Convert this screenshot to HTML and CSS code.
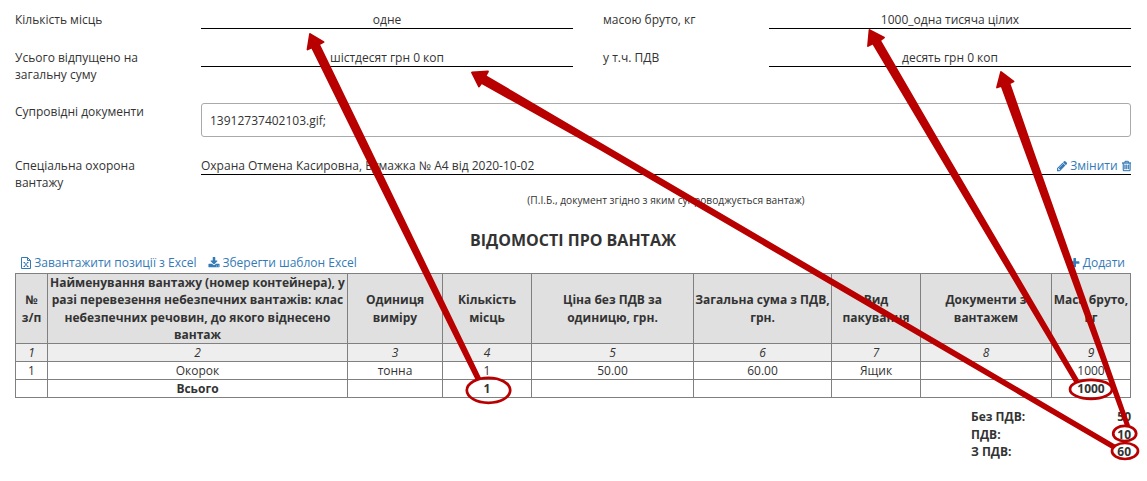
FILE: index.html
```html
<!DOCTYPE html>
<html lang="uk">
<head>
<meta charset="utf-8">
<title>Відомості про вантаж</title>
<link rel="stylesheet" href="styles.css">
</head>
<body>
<main class="page">
  <section class="form">
    <div class="row">
      <div class="label">Кількість місць</div><div class="line">одне</div>
      <div class="label label-mid">масою бруто, кг</div><div class="line">1000_одна тисяча цілих</div>
    </div>
    <div class="row row-sum">
      <div class="label">Усього відпущено на загальну суму</div><div class="line">шістдесят грн 0 коп</div>
      <div class="label label-mid">у т.ч. ПДВ</div><div class="line">десять грн 0 коп</div>
    </div>
    <div class="row row-wide row-docs">
      <div class="label">Супровідні документи</div><div class="files">13912737402103.gif;</div>
    </div>
    <div class="row row-wide row-guard">
      <div class="label">Спеціальна охорона вантажу</div>
      <div>
        <div class="line line-guard">
          <span>Охрана Отмена Касировна, Бумажка № А4 від 2020-10-02</span>
          <span class="actions">
            <a class="link"><svg class="icon icon-pencil" viewBox="128 0 1536 1792"><path d="M491 1536l91-91-235-235-91 91v107h128v128h107zm523-928q0-22-22-22-10 0-17 7l-542 542q-7 7-7 17 0 22 22 22 10 0 17-7l542-542q7-7 7-17zm-54-192l416 416-832 832h-416v-416zm683 96q0 53-37 90l-166 166-416-416 166-165q36-38 90-38 53 0 91 38l235 234q37 39 37 91z"/></svg>Змінити</a>
            <a class="link"><svg class="icon icon-trash" viewBox="192 0 1408 1792"><path d="M704 736v576q0 14-9 23t-23 9h-64q-14 0-23-9t-9-23v-576q0-14 9-23t23-9h64q14 0 23 9t9 23zm256 0v576q0 14-9 23t-23 9h-64q-14 0-23-9t-9-23v-576q0-14 9-23t23-9h64q14 0 23 9t9 23zm256 0v576q0 14-9 23t-23 9h-64q-14 0-23-9t-9-23v-576q0-14 9-23t23-9h64q14 0 23 9t9 23zm128 724v-948h-896v948q0 22 7 40.5t14.5 27 10.5 8.500h832q3 0 10.5-8.500t14.5-27 7-40.500zm-672-1076h448l-48-117q-7-9-17-11h-317q-10 2-17 11zm928 32v64q0 14-9 23t-23 9h-96v948q0 83-47 143.500t-113 60.500h-832q-66 0-113-58.500t-47-141.500v-952h-96q-14 0-23-9t-9-23v-64q0-14 9-23t23-9h309l70-167q15-37 54-63t79-26h320q40 0 79 26t54 63l70 167h309q14 0 23 9t9 23z"/></svg></a>
          </span>
        </div>
        <div class="hint">(П.І.Б., документ згідно з яким супроводжується вантаж)</div>
      </div>
    </div>
  </section>

  <h1 class="title">ВІДОМОСТІ ПРО ВАНТАЖ</h1>

  <nav class="toolbar">
    <a class="link"><svg class="icon icon-excel" viewBox="0 0 10 12"><path class="stroke" d="M.5 .5H6.5L9.500 3.500V11.500H.5ZM6.500 .5V3.500H9.500M2.600 5.500H4.100M5.900 5.500H7.400M3.200 5.500L6.800 9.500M6.800 5.500L3.200 9.500M2.600 9.500H4.100M5.900 9.500H7.400"/></svg>Завантажити позиції з Excel</a>
    <a class="link link-save"><svg class="icon" viewBox="0 0 1792 1792"><path d="M1344 1344q0-26-19-45t-45-19-45 19-19 45 19 45 45 19 45-19 19-45zm256 0q0-26-19-45t-45-19-45 19-19 45 19 45 45 19 45-19 19-45zm128-224v320q0 40-28 68t-68 28h-1472q-40 0-68-28t-28-68v-320q0-40 28-68t68-28h465l135 136q58 56 136 56t136-56l136-136h464q40 0 68 28t28 68zm-325-569q17 41-14 70l-448 448q-18 19-45 19t-45-19l-448-448q-31-29-14-70 17-39 59-39h256v-448q0-26 19-45t45-19h256q26 0 45 19t19 45v448h256q42 0 59 39z"/></svg>Зберегти шаблон Excel</a>
    <a class="link link-add"><svg class="icon icon-plus" viewBox="192 0 1408 1792"><path d="M1600 736v192q0 40-28 68t-68 28h-416v416q0 40-28 68t-68 28h-192q-40 0-68-28t-28-68v-416h-416q-40 0-68-28t-28-68v-192q0-40 28-68t68-28h416v-416q0-40 28-68t68-28h192q40 0 68 28t28 68v416h416q40 0 68 28t28 68z"/></svg>Додати</a>
  </nav>

  <table class="cargo">
    <colgroup>
      <col class="c1"><col class="c2"><col class="c3"><col class="c4"><col class="c5"><col class="c6"><col class="c7"><col class="c8"><col class="c9">
    </colgroup>
    <thead>
      <tr class="head"><th>№<br>з/п</th><th>Найменування вантажу (номер контейнера), у разі перевезення небезпечних вантажів: клас небезпечних речовин, до якого віднесено вантаж</th><th>Одиниця виміру</th><th>Кількість місць</th><th>Ціна без ПДВ за одиницю, грн.</th><th>Загальна сума з ПДВ, грн.</th><th>Вид пакування</th><th>Документи з вантажем</th><th>Маса бруто, кг</th></tr>
      <tr class="numbers"><td>1</td><td>2</td><td>3</td><td>4</td><td>5</td><td>6</td><td>7</td><td>8</td><td>9</td></tr>
    </thead>
    <tbody>
      <tr><td>1</td><td>Окорок</td><td>тонна</td><td>1</td><td>50.00</td><td>60.00</td><td>Ящик</td><td></td><td>1000</td></tr>
      <tr class="total"><td></td><td>Всього</td><td></td><td>1</td><td></td><td></td><td></td><td></td><td>1000</td></tr>
    </tbody>
  </table>

  <dl class="summary">
    <dt>Без ПДВ:</dt><dd>50</dd>
    <dt>ПДВ:</dt><dd>10</dd>
    <dt>З ПДВ:</dt><dd>60</dd>
  </dl>
</main>

<svg class="marks" viewBox="0 0 1147 481">
  <g class="arrows">
    <path d="M310 34L323.500 42L319 44.500L370 150L480 378L476.500 379.500L362.500 150L312 47.500L307.500 49.500Z"/>
    <path d="M472 72.500L488 71.500L485.500 76L611.500 150L1115 445.500L1113 448.500L601.500 150L481.500 83L479 86.500Z"/>
    <path d="M869.500 30L884 37.500L880 40.500L943.500 150L1078 380L1075 382L936.500 150L873 43.500L868 46Z"/>
    <path d="M1001 72L1013.500 81.500L1009.500 83.500L1032.500 150L1129 425L1126 426L1025 150L1001.500 86L997 87.500Z"/>
  </g>
  <g class="rings">
    <ellipse cx="488.500" cy="390.300" rx="21.700" ry="12.500"/>
    <ellipse cx="1091" cy="389.300" rx="21" ry="9.500"/>
    <ellipse cx="1124.700" cy="433.500" rx="11.500" ry="7.700"/>
    <ellipse cx="1125" cy="451" rx="13" ry="8"/>
  </g>
</svg>
</body>
</html>
```

FILE: styles.css
```css
* { box-sizing: border-box; }
body {
  margin: 0;
  height: 481px;
  overflow: hidden;
  background: #fff;
  color: #333;
  font: 12px/17px "Open Sans", "Noto Sans", sans-serif;
}
.page { padding: 11px 16px 0 15px; }
.row {
  display: grid;
  grid-template-columns: 156px 372px 136px 362px;
  column-gap: 30px;
  align-items: start;
}
.row-wide { grid-template-columns: 156px 930px; }
.row-sum { margin-top: 20px; }
.row-docs { margin-top: 20px; }
.row-guard { margin-top: 20px; }
.line { height: 18px; border-bottom: 1px solid #000; text-align: center; }
.line-guard { display: flex; justify-content: space-between; }
.actions { display: flex; gap: 4px; }
.files {
  height: 34px;
  padding: 8px;
  border: 1px solid #aaa;
  border-radius: 3px;
}
.hint { margin-top: 17px; font-size: 10.200px; line-height: 17px; text-align: center; }
.title { margin: 20px 0 0; font-size: 16px; line-height: 22px; text-align: center; }
.toolbar { display: flex; gap: 11.500px; margin-top: 3px; padding: 0 6px; height: 19px; }
.link { display: flex; align-items: center; gap: 3px; height: 17px; color: #337ab7; }
.link-save { gap: 2.500px; }
.link-add { margin-left: auto; }
.icon { width: 12px; height: 12px; fill: currentColor; }
.icon-excel { width: 10px; margin-right: .3px; }
.icon-pencil { width: 10.300px; }
.icon-trash, .icon-plus { width: 9.400px; }
.icon-trash { stroke: currentColor; stroke-width: 50; }
.stroke { fill: none; stroke: currentColor; stroke-width: 1; }
.cargo { width: 1116px; table-layout: fixed; border-collapse: collapse; }
.cargo th, .cargo td { height: 18px; padding: 0 1px; border: 1px solid #808080; text-align: center; vertical-align: middle; }
.cargo .head th { height: 70px; background: #e0e0e0; line-height: 1.42857; }
.numbers { background: #eee; font-style: italic; }
.total { font-weight: bold; }
.c1 { width: 32px; }
.c2 { width: 300px; }
.c3 { width: 95px; }
.c4 { width: 89px; }
.c5 { width: 162px; }
.c6 { width: 138px; }
.c7 { width: 89px; }
.c8 { width: 131px; }
.c9 { width: 79px; }
.summary {
  display: grid;
  grid-template-columns: 1fr auto;
  width: 160px;
  margin: 10px 0 0 auto;
  row-gap: .5px;
  font-weight: bold;
}
.summary dd { margin: 0; text-align: right; }
.marks { position: absolute; left: 0; top: 0; width: 1147px; height: 481px; pointer-events: none; }
.arrows { fill: #b80000; stroke: #b80000; stroke-width: 1.800; stroke-linejoin: round; }
.rings { fill: none; stroke: #b80000; stroke-width: 2.700; }
```
